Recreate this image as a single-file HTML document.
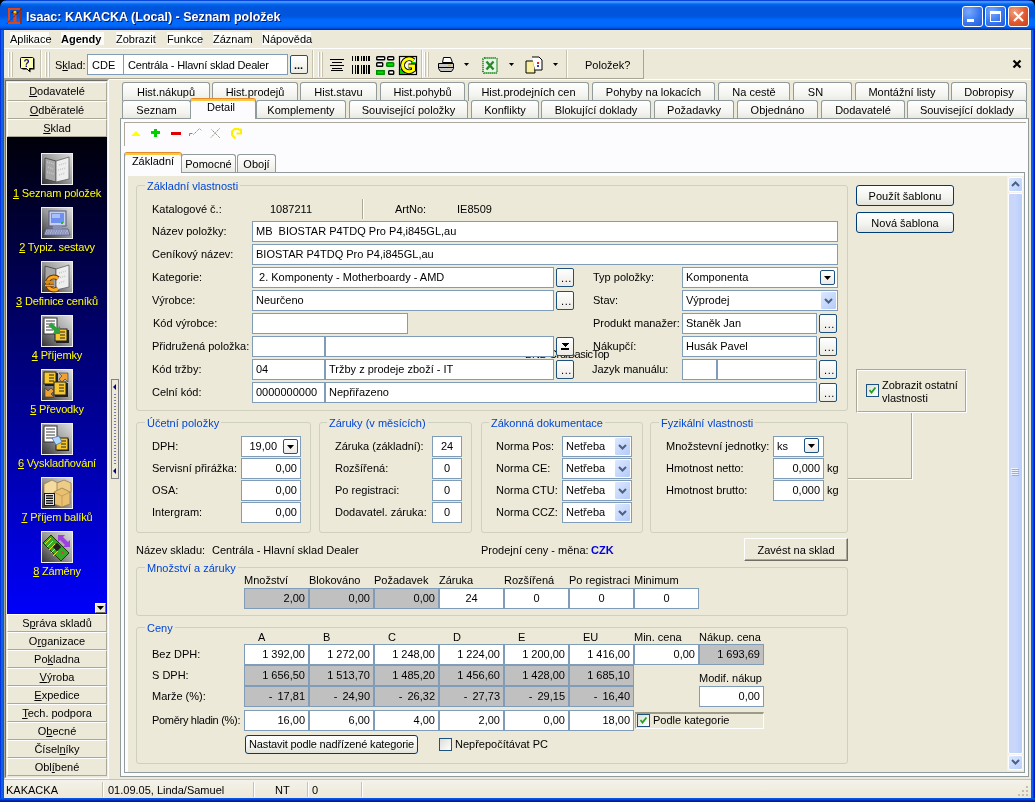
<!DOCTYPE html><html><head><meta charset="utf-8"><style>
*{margin:0;padding:0;box-sizing:border-box}
html,body{width:1035px;height:802px;overflow:hidden;background:#ECE9D8;font-family:"Liberation Sans",sans-serif;font-size:11px;color:#000}
div{position:absolute}
.t{white-space:pre;line-height:13px}
.u{text-decoration:underline}
.inp{background:#fff;border:1px solid #7F9DB9}
.gry{background:#C0C0C0;border:1px solid #7F9DB9}
.grp{border:1px solid #D0D0BF;border-radius:3px}
.gt{color:#0046D5;background:#ECE9D8;padding:0 2px}
.btn{border:1px solid #003C74;border-radius:3px;background:linear-gradient(#FFFFFF,#F3F3EF 60%,#E3E2DA);text-align:center;line-height:18px}
.dots{border:1px solid #1C5180;border-radius:2px;background:linear-gradient(#FFFFFF,#ECEBE6);}
.tab{border:1px solid #919B9C;border-bottom:none;border-radius:3px 3px 0 0;background:linear-gradient(#FFFFFF,#F3F3EF 70%,#E9E8E1);text-align:center;line-height:16px}
.tabsel{border:1px solid #919B9C;border-bottom:none;border-radius:3px 3px 0 0;background:#FCFCFE;text-align:center;border-top:1px solid #E68B2C;box-shadow:inset 0 2px #FFC83C}
.sb{background:#ECE9D8;border-top:1px solid #fff;border-left:1px solid #fff;border-right:1px solid #ACA899;border-bottom:1px solid #ACA899;text-align:center;line-height:16px}
</style></head><body><div id="root" style="left:0;top:0;width:1035px;height:802px;overflow:hidden;will-change:transform"><div style="left:0;top:0;width:1035px;height:8px;background:#000"></div>
<div style="left:0;top:0;width:1035px;height:30px;border-radius:7px 7px 0 0;background:linear-gradient(#0845D8 0px,#0845D8 1px,#3D95FF 1px,#3D95FF 2px,#3A90FF 2px,#3A90FF 3px,#0A77FF 3px,#0A77FF 4px,#0068F0 4px,#0068F0 5px,#005EE5 5px,#005EE5 6px,#0058DF 6px,#0058DF 7px,#0055DC 7px,#0055DC 8px,#0055DC 8px,#0055DC 9px,#0055DC 9px,#0055DC 10px,#0055DC 10px,#0055DC 11px,#0055DC 11px,#0055DC 12px,#0055DC 12px,#0055DC 13px,#0055DC 13px,#0055DC 14px,#0055DC 14px,#0055DC 15px,#0056DE 15px,#0056DE 16px,#0058E2 16px,#0058E2 17px,#005CE8 17px,#005CE8 18px,#0062F0 18px,#0062F0 19px,#0066F8 19px,#0066F8 20px,#006AFF 20px,#006AFF 21px,#006AFF 21px,#006AFF 22px,#006AFF 22px,#006AFF 23px,#006AFF 23px,#006AFF 24px,#006AFF 24px,#006AFF 25px,#0068FC 25px,#0068FC 26px,#0062F2 26px,#0062F2 27px,#0058E4 27px,#0058E4 28px,#0048D0 28px,#0048D0 29px,#0032B8 29px,#0032B8 30px)"></div>
<div style="left:0;top:30px;width:4px;height:772px;background:linear-gradient(90deg,#0019CF,#0853EB 1px,#166AEE 2px,#0855DD 3px)"></div>
<div style="left:1031px;top:30px;width:4px;height:772px;background:linear-gradient(90deg,#0855DD,#166AEE 1px,#0853EB 2px,#0019CF 3px)"></div>
<div style="left:0;top:798px;width:1035px;height:4px;background:linear-gradient(#0855DD,#0853EB 1px,#0733C0 2px,#001A9C 3px)"></div>
<svg style="position:absolute;left:6px;top:8px" width="17" height="17"><rect x="3" y="1" width="12" height="14" fill="none" stroke="#D84820" stroke-width="2"/><path d="M15 0V16" stroke="#8A2010" stroke-width="1.5"/><rect x="7.5" y="6" width="3" height="9" fill="#D84820"/><path d="M5.5 5L9 2.5L12 5" fill="none" stroke="#401008" stroke-width="1.2"/><circle cx="9" cy="4" r="1.6" fill="#FFD000"/><path d="M0.5 16L16 0.5" stroke="#6A1808" stroke-width="1" stroke-dasharray="1.5,1"/></svg>
<div class="t " style="left:26px;top:10px;font-size:12.5px;font-weight:bold;color:#fff;line-height:14px;text-shadow:1px 1px #0A1864">Isaac: KAKACKA (Local) - Seznam položek</div>
<div style="left:962px;top:6px;width:21px;height:21px;border:1px solid #fff;border-radius:3px;background:radial-gradient(circle at 30% 25%,#7AAAFF,#3A78F0 55%,#2458D8)"></div>
<div style="left:985px;top:6px;width:21px;height:21px;border:1px solid #fff;border-radius:3px;background:radial-gradient(circle at 30% 25%,#7AAAFF,#3A78F0 55%,#2458D8)"></div>
<div style="left:967px;top:19px;width:7px;height:3px;background:#fff"></div>
<div style="left:990px;top:11px;width:11px;height:11px;border:1px solid #fff;border-top:3px solid #fff"></div>
<div style="left:1008px;top:6px;width:21px;height:21px;border:1px solid #fff;border-radius:3px;background:radial-gradient(circle at 30% 25%,#F0A080,#E05A30 55%,#C8401C)"></div>
<svg style="position:absolute;left:1008px;top:6px" width="21" height="21"><path d="M6 6 L15 15 M15 6 L6 15" stroke="#fff" stroke-width="2.2"/></svg>
<div style="left:10px;top:32px;width:39px;height:13px;background:#FBFBF8"></div>
<div class="t " style="left:10px;top:33px;">Aplikace</div>
<div style="left:61px;top:32px;width:43px;height:13px;background:#FBFBF8"></div>
<div class="t " style="left:61px;top:33px;font-weight:bold">Agendy</div>
<div style="left:116px;top:32px;width:39px;height:13px;background:#FBFBF8"></div>
<div class="t " style="left:116px;top:33px;">Zobrazit</div>
<div style="left:167px;top:32px;width:34px;height:13px;background:#FBFBF8"></div>
<div class="t " style="left:167px;top:33px;">Funkce</div>
<div style="left:213px;top:32px;width:37px;height:13px;background:#FBFBF8"></div>
<div class="t " style="left:213px;top:33px;">Záznam</div>
<div style="left:262px;top:32px;width:49px;height:13px;background:#FBFBF8"></div>
<div class="t " style="left:262px;top:33px;">Nápověda</div>
<div style="left:4px;top:48px;width:1027px;height:1px;background:#fff"></div>
<div style="left:4px;top:78px;width:640px;height:1px;background:#A8A596"></div><div style="left:4px;top:79px;width:1027px;height:1px;background:#fff"></div>
<div style="left:8px;top:52px;width:1px;height:25px;background:#fff"></div>
<div style="left:9px;top:52px;width:1px;height:25px;background:#C5C2B2"></div>
<div style="left:11px;top:52px;width:1px;height:25px;background:#fff"></div>
<div style="left:12px;top:52px;width:1px;height:25px;background:#C5C2B2"></div>
<div style="left:40px;top:50px;width:1px;height:28px;background:#C5C2B2"></div>
<div style="left:41px;top:50px;width:1px;height:28px;background:#fff"></div>
<div style="left:45px;top:52px;width:1px;height:25px;background:#fff"></div>
<div style="left:46px;top:52px;width:1px;height:25px;background:#C5C2B2"></div>
<div style="left:48px;top:52px;width:1px;height:25px;background:#fff"></div>
<div style="left:49px;top:52px;width:1px;height:25px;background:#C5C2B2"></div>
<svg style="position:absolute;left:20px;top:57px" width="15" height="16"><path d="M2.5 1.5H14.5V12.5H10.5V15.5L7.5 12.5H2.5Z" fill="#000"/><path d="M1.5 0.5H12.5Q13.5 0.5 13.5 1.5V10.5Q13.5 11.5 12.5 11.5H9.5V14.5L6.5 11.5H1.5Q0.5 11.5 0.5 10.5V1.5Q0.5 0.5 1.5 0.5Z" fill="#FFFFB0" stroke="#000"/><text x="3.5" y="10" font-family="Liberation Sans" font-weight="bold" font-size="10" fill="#10108A">?</text></svg>
<div class="t " style="left:55px;top:59px;">S<span class="u">k</span>lad:</div>
<div class="inp" style="left:87px;top:54px;width:37px;height:21px;"></div>
<div class="t " style="left:92px;top:59px;">CDE</div>
<div class="inp" style="left:123px;top:54px;width:165px;height:21px;"></div>
<div class="t " style="left:128px;top:59px;letter-spacing:-0.2px">Centrála - Hlavní sklad Dealer</div>
<div class="dots" style="left:290px;top:55px;width:18px;height:19px;"><div class="t" style="left:3px;top:3px;font-weight:bold">...</div></div>
<div style="left:312px;top:50px;width:1px;height:28px;background:#C5C2B2"></div>
<div style="left:313px;top:50px;width:1px;height:28px;background:#fff"></div>
<div style="left:318px;top:52px;width:1px;height:25px;background:#fff"></div>
<div style="left:319px;top:52px;width:1px;height:25px;background:#C5C2B2"></div>
<div style="left:321px;top:52px;width:1px;height:25px;background:#fff"></div>
<div style="left:322px;top:52px;width:1px;height:25px;background:#C5C2B2"></div>
<svg style="position:absolute;left:329px;top:58px" width="16" height="14" shape-rendering="crispEdges"><path d="M1 1.5H15M3 4.5H13M1 7.5H15M3 10.5H13M2 12.5H14" stroke="#000" stroke-width="1"/></svg>
<svg style="position:absolute;left:351px;top:55px" width="20" height="20" shape-rendering="crispEdges"><g stroke="#000" stroke-width="1"><path d="M1.5 1V6M4.5 1V6M6.5 1V6M7.5 1V6M10.5 1V6M12.5 1V6M13.5 1V6M15.5 1V6M17.5 1V6M18.5 1V6"/><path d="M1.5 10V19M4.5 10V19M6.5 10V19M7.5 10V19M10.5 10V19M12.5 10V19M13.5 10V19M15.5 10V19M17.5 10V19M18.5 10V19"/></g></svg>
<svg style="position:absolute;left:375px;top:55px" width="20" height="21"><g stroke="#000" stroke-width="1.4"><rect x="1.7" y="1.7" width="8" height="3" rx="0.8" fill="#fff"/><rect x="12.7" y="1.7" width="6" height="3" rx="0.8" fill="#fff"/><rect x="1.7" y="7.7" width="6" height="3.5" rx="0.8" fill="#fff"/><rect x="11.7" y="7.7" width="7" height="3.5" rx="0.8" fill="#00E000" stroke="#008800"/><rect x="1.7" y="15.7" width="7.5" height="3.5" fill="#00E000" stroke="#008800"/><rect x="13.7" y="15.7" width="5" height="3.5" rx="0.8" fill="#fff"/></g></svg>
<svg style="position:absolute;left:398px;top:55px" width="20" height="21"><rect x="1.5" y="1.5" width="17" height="18" fill="#F4F4F4" stroke="#000" stroke-width="1.2"/><rect x="13" y="7" width="5" height="5" fill="#00D000"/><rect x="2" y="14" width="5" height="5" fill="#00D000"/><path d="M15.5 5.5 A6.5 6.5 0 1 0 15.5 15 L15.5 11 H10.5" fill="none" stroke="#000" stroke-width="5"/><path d="M15.5 5.5 A6.5 6.5 0 1 0 15.5 15 L15.5 11 H10.5" fill="none" stroke="#FFFF00" stroke-width="3"/></svg>
<div style="left:421px;top:50px;width:1px;height:28px;background:#C5C2B2"></div>
<div style="left:422px;top:50px;width:1px;height:28px;background:#fff"></div>
<div style="left:424px;top:52px;width:1px;height:25px;background:#fff"></div>
<div style="left:425px;top:52px;width:1px;height:25px;background:#C5C2B2"></div>
<div style="left:427px;top:52px;width:1px;height:25px;background:#fff"></div>
<div style="left:428px;top:52px;width:1px;height:25px;background:#C5C2B2"></div>
<svg style="position:absolute;left:437px;top:57px" width="18" height="16"><path d="M6.5 0.5H13.5L15.5 5.5H5.5Z" fill="#fff" stroke="#000"/><path d="M1.5 6.5H16.5V11.5L14.5 14.5H3.5L1.5 11.5Z" fill="#C8C8C8" stroke="#000"/><path d="M2 10.5H16" stroke="#000"/><path d="M11 8.5H14" stroke="#E0C000" stroke-width="1.5"/></svg>
<svg style="position:absolute;left:464px;top:63px" width="6" height="4"><path d="M0 0H5L2.5 3Z" fill="#000"/></svg>
<svg style="position:absolute;left:482px;top:57px" width="17" height="17"><rect x="1" y="1" width="14" height="15" rx="1.5" fill="#E8F4E8" stroke="#1E8A1E" stroke-width="2" stroke-dasharray="1.2,0.8"/><path d="M4.5 4.5L11.5 12.5M11.5 4.5L4.5 12.5" stroke="#2A8A2A" stroke-width="2.4"/></svg>
<svg style="position:absolute;left:509px;top:63px" width="6" height="4"><path d="M0 0H5L2.5 3Z" fill="#000"/></svg>
<svg style="position:absolute;left:525px;top:56px" width="18" height="18"><path d="M1 5H9L10 17H1Z" fill="#F8F0A0" stroke="#000"/><path d="M7 1H14L17 4V14H10" fill="#fff" stroke="#000"/><rect x="12" y="6" width="2" height="2" fill="#E02020"/><rect x="12" y="9" width="2" height="2" fill="#2040E0"/></svg>
<svg style="position:absolute;left:553px;top:63px" width="6" height="4"><path d="M0 0H5L2.5 3Z" fill="#000"/></svg>
<div style="left:566px;top:50px;width:1px;height:28px;background:#C5C2B2"></div>
<div style="left:567px;top:50px;width:1px;height:28px;background:#fff"></div>
<div class="t " style="left:585px;top:59px;">Položek?</div>
<div style="left:643px;top:50px;width:1px;height:29px;background:#A8A596"></div>
<svg style="position:absolute;left:1012px;top:59px" width="10" height="10"><path d="M1.5 1.5L8.5 8.5M8.5 1.5L1.5 8.5" stroke="#000" stroke-width="2.2"/></svg>
<div style="left:4px;top:79px;width:105px;height:700px;border-top:1px solid #ACA899;border-left:1px solid #ACA899;border-right:1px solid #fff;border-bottom:1px solid #fff"></div>
<div style="left:5px;top:80px;width:103px;height:698px;border-top:1px solid #716F64;border-left:1px solid #716F64;border-right:1px solid #F1EFE2;border-bottom:1px solid #F1EFE2"></div>
<div class="sb" style="left:7px;top:82px;width:100px;height:19px"><span class="u">D</span>odavatelé</div>
<div class="sb" style="left:7px;top:101px;width:100px;height:18px"><span class="u">O</span>dběratelé</div>
<div class="sb" style="left:7px;top:119px;width:100px;height:18px"><span class="u">S</span>klad</div>
<div style="left:7px;top:137px;width:100px;height:477px;background:linear-gradient(#00000A,#0000FA)"></div>
<svg style="position:absolute;left:41px;top:153px" width="32" height="32"><defs><linearGradient id="g0" x1="1" y1="0" x2="0" y2="1"><stop offset="0" stop-color="#E0E0E0"/><stop offset="0.5" stop-color="#9A9A9A"/><stop offset="1" stop-color="#303030"/></linearGradient></defs><rect x="0.5" y="0.5" width="31" height="31" fill="url(#g0)" stroke="#F0F0F0"/><path d="M4 5L15 8V29L4 26Z" fill="#A8A8A8" stroke="#404040" stroke-width="0.8"/><path d="M15 8L28 4V26L15 29Z" fill="#EEEEEE" stroke="#606060" stroke-width="0.8"/><path d="M6 9L13 11M7 14L12 16M6 19L13 21" stroke="#C8C8C8" stroke-width="1.5" stroke-dasharray="1,1"/><path d="M18 12L25 10M17 17L25 15M18 22L24 20" stroke="#C8C8C8" stroke-width="1.5" stroke-dasharray="1,1"/></svg>
<div class="t" style="left:7px;top:187px;width:100px;text-align:center;color:#FFFF00;letter-spacing:-0.15px"><span class="u">1</span> Seznam položek</div>
<svg style="position:absolute;left:41px;top:207px" width="32" height="32"><defs><linearGradient id="g1" x1="1" y1="0" x2="0" y2="1"><stop offset="0" stop-color="#E0E0E0"/><stop offset="0.5" stop-color="#9A9A9A"/><stop offset="1" stop-color="#303030"/></linearGradient></defs><rect x="0.5" y="0.5" width="31" height="31" fill="url(#g1)" stroke="#F0F0F0"/><rect x="8" y="4" width="17" height="15" fill="#C8D0F0" stroke="#505878"/><rect x="10" y="6" width="13" height="10" fill="#7090F0"/><rect x="11" y="7" width="8" height="4" fill="#A8C0FF"/><path d="M5 22H27L29 28H3Z" fill="#A8B0D8" stroke="#505878" stroke-width="0.8"/><path d="M6 24H26M5 26H27" stroke="#606890" stroke-width="0.8" stroke-dasharray="1.5,1"/><rect x="12" y="19" width="9" height="3" fill="#8890B8"/><rect x="20" y="15" width="2" height="2" fill="#20C020"/></svg>
<div class="t" style="left:7px;top:241px;width:100px;text-align:center;color:#FFFF00;letter-spacing:-0.15px"><span class="u">2</span> Typiz. sestavy</div>
<svg style="position:absolute;left:41px;top:261px" width="32" height="32"><defs><linearGradient id="g2" x1="1" y1="0" x2="0" y2="1"><stop offset="0" stop-color="#E0E0E0"/><stop offset="0.5" stop-color="#9A9A9A"/><stop offset="1" stop-color="#303030"/></linearGradient></defs><rect x="0.5" y="0.5" width="31" height="31" fill="url(#g2)" stroke="#F0F0F0"/><path d="M4 5L15 8V29L4 26Z" fill="#A8A8A8" stroke="#404040" stroke-width="0.8"/><path d="M15 8L28 4V26L15 29Z" fill="#EEEEEE" stroke="#606060" stroke-width="0.8"/><path d="M18 12L25 10M17 17L25 15M18 22L24 20" stroke="#C8C8C8" stroke-width="1.5" stroke-dasharray="1,1"/><path d="M17 17.5 A6.5 6.5 0 1 0 17 27.5" fill="none" stroke="#6A3000" stroke-width="5"/><path d="M17 17.5 A6.5 6.5 0 1 0 17 27.5" fill="none" stroke="#F8A820" stroke-width="3"/><path d="M4 21H13M4 24.5H13" stroke="#6A3000" stroke-width="2.6"/><path d="M4 21H13M4 24.5H13" stroke="#F8A820" stroke-width="1.4"/></svg>
<div class="t" style="left:7px;top:295px;width:100px;text-align:center;color:#FFFF00;letter-spacing:-0.15px"><span class="u">3</span> Definice ceníků</div>
<svg style="position:absolute;left:41px;top:315px" width="32" height="32"><defs><linearGradient id="g3" x1="1" y1="0" x2="0" y2="1"><stop offset="0" stop-color="#E0E0E0"/><stop offset="0.5" stop-color="#9A9A9A"/><stop offset="1" stop-color="#303030"/></linearGradient></defs><rect x="0.5" y="0.5" width="31" height="31" fill="url(#g3)" stroke="#F0F0F0"/><rect x="3" y="3" width="13" height="16" fill="#fff" stroke="#303030"/><path d="M5 6H14M5 9H14M5 12H14M5 15H12" stroke="#404040"/><rect x="15" y="15" width="13" height="13" fill="#202020"/><rect x="14" y="14" width="12" height="12" fill="#F8C830" stroke="#202020"/><path d="M19 17H24M19 20H24M19 23H24" stroke="#202020"/><path d="M16 17V19" stroke="#202020"/><path d="M9 9L16 16" stroke="#30A040" stroke-width="4"/><path d="M19 19H11L19 11Z" fill="#30A040"/></svg>
<div class="t" style="left:7px;top:349px;width:100px;text-align:center;color:#FFFF00;letter-spacing:-0.15px"><span class="u">4</span> Příjemky</div>
<svg style="position:absolute;left:41px;top:369px" width="32" height="32"><defs><linearGradient id="g4" x1="1" y1="0" x2="0" y2="1"><stop offset="0" stop-color="#E0E0E0"/><stop offset="0.5" stop-color="#9A9A9A"/><stop offset="1" stop-color="#303030"/></linearGradient></defs><rect x="0.5" y="0.5" width="31" height="31" fill="url(#g4)" stroke="#F0F0F0"/><rect x="4" y="4" width="13" height="13" fill="#202020"/><rect x="3" y="3" width="12" height="12" fill="#F8C830" stroke="#202020"/><path d="M8 6H13M8 9H13M8 12H13" stroke="#202020"/><rect x="14" y="14" width="13" height="14" fill="#202020"/><rect x="13" y="13" width="12" height="13" fill="#F8C830" stroke="#202020"/><path d="M18 16H23M18 19H23M18 22H23" stroke="#202020"/><path d="M18 4H27V13L24 10L21 13L18 10L21 7Z" fill="#F0A030" stroke="#303030" stroke-width="0.6"/><path d="M4 19L7 22L10 19L13 22L10 25L13 28H4Z" fill="#F0A030" stroke="#303030" stroke-width="0.6"/></svg>
<div class="t" style="left:7px;top:403px;width:100px;text-align:center;color:#FFFF00;letter-spacing:-0.15px"><span class="u">5</span> Převodky</div>
<svg style="position:absolute;left:41px;top:423px" width="32" height="32"><defs><linearGradient id="g5" x1="1" y1="0" x2="0" y2="1"><stop offset="0" stop-color="#E0E0E0"/><stop offset="0.5" stop-color="#9A9A9A"/><stop offset="1" stop-color="#303030"/></linearGradient></defs><rect x="0.5" y="0.5" width="31" height="31" fill="url(#g5)" stroke="#F0F0F0"/><rect x="3" y="3" width="13" height="16" fill="#fff" stroke="#303030"/><path d="M5 6H14M5 9H14M5 12H14M5 15H12" stroke="#404040"/><rect x="16" y="16" width="12" height="12" fill="#202020"/><rect x="15" y="15" width="12" height="12" fill="#F8C830" stroke="#202020"/><path d="M20 18H25M20 21H25M20 24H25" stroke="#202020"/><path d="M11 15L18 13L21 19L15 22Z" fill="#B0D8FF" stroke="#5070A0" stroke-width="0.8"/></svg>
<div class="t" style="left:7px;top:457px;width:100px;text-align:center;color:#FFFF00;letter-spacing:-0.15px"><span class="u">6</span> Vyskladňování</div>
<svg style="position:absolute;left:41px;top:477px" width="32" height="32"><defs><linearGradient id="g6" x1="1" y1="0" x2="0" y2="1"><stop offset="0" stop-color="#E0E0E0"/><stop offset="0.5" stop-color="#9A9A9A"/><stop offset="1" stop-color="#303030"/></linearGradient></defs><rect x="0.5" y="0.5" width="31" height="31" fill="url(#g6)" stroke="#F0F0F0"/><path d="M3 7L11 3L19 7V16L11 19L3 16Z" fill="#F4DCA0" stroke="#907040" stroke-width="0.7"/><path d="M16 6L23 3L30 6V15L23 18L16 15Z" fill="#ECCC88" stroke="#907040" stroke-width="0.7"/><path d="M13 15L21 11L29 15V27L21 30L13 27Z" fill="#E8C070" stroke="#907040" stroke-width="0.7"/><path d="M13 15L21 19L29 15M21 19V30" stroke="#B89050" stroke-width="0.7" fill="none"/><rect x="3" y="16" width="11" height="13" fill="#181818"/><rect x="4.5" y="17.5" width="8" height="10" fill="none" stroke="#E8E8E8" stroke-width="1"/><path d="M5 20H12M5 22.5H12M5 25H12" stroke="#E8E8E8" stroke-width="1"/></svg>
<div class="t" style="left:7px;top:511px;width:100px;text-align:center;color:#FFFF00;letter-spacing:-0.15px"><span class="u">7</span> Příjem balíků</div>
<svg style="position:absolute;left:41px;top:531px" width="32" height="32"><defs><linearGradient id="g7" x1="1" y1="0" x2="0" y2="1"><stop offset="0" stop-color="#E0E0E0"/><stop offset="0.5" stop-color="#9A9A9A"/><stop offset="1" stop-color="#303030"/></linearGradient></defs><rect x="0.5" y="0.5" width="31" height="31" fill="url(#g7)" stroke="#F0F0F0"/><path d="M2 12L10 4L28 22L20 30Z" fill="#38A828" stroke="#183808" stroke-width="1"/><path d="M4 13L10 7M6 16L12 10M8 19L14 13M10 22L16 16M12 25L17 20" stroke="#F0E020" stroke-width="1"/><rect x="13" y="13" width="6" height="6" fill="#202020" transform="rotate(45 16 16)"/><rect x="20" y="20" width="3" height="3" fill="#E04040"/><path d="M17 4H24L22 6L27 11L29 9V16H22L24 14L19 9L17 11Z" fill="#A040E0"/></svg>
<div class="t" style="left:7px;top:565px;width:100px;text-align:center;color:#FFFF00;letter-spacing:-0.15px"><span class="u">8</span> Záměny</div>
<div style="left:95px;top:603px;width:11px;height:10px;background:#ECE9D8;border:1px solid #fff;border-right-color:#716F64;border-bottom-color:#716F64"></div>
<svg style="position:absolute;left:97px;top:606px" width="7" height="4"><path d="M0 0H7L3.5 4Z" fill="#000"/></svg>
<div class="sb" style="left:7px;top:614px;width:100px;height:18px">S<span class="u">p</span>ráva skladů</div>
<div class="sb" style="left:7px;top:632px;width:100px;height:18px">O<span class="u">r</span>ganizace</div>
<div class="sb" style="left:7px;top:650px;width:100px;height:18px">Po<span class="u">k</span>ladna</div>
<div class="sb" style="left:7px;top:668px;width:100px;height:18px"><span class="u">V</span>ýroba</div>
<div class="sb" style="left:7px;top:686px;width:100px;height:18px"><span class="u">E</span>xpedice</div>
<div class="sb" style="left:7px;top:704px;width:100px;height:18px"><span class="u">T</span>ech. podpora</div>
<div class="sb" style="left:7px;top:722px;width:100px;height:18px">O<span class="u">b</span>ecné</div>
<div class="sb" style="left:7px;top:740px;width:100px;height:18px">Čísel<span class="u">n</span>íky</div>
<div class="sb" style="left:7px;top:758px;width:100px;height:18px">Obl<span class="u">í</span>bené</div>
<div style="left:111px;top:379px;width:8px;height:100px;border:1px solid #808080;background:#ECE9D8"></div>
<svg style="position:absolute;left:113px;top:384px" width="4" height="90"><path d="M3 0V6L0 3Z" fill="#000080"/><path d="M3 84V90L0 87Z" fill="#000080"/><path d="M2 10V80" stroke="#000080" stroke-dasharray="1,2"/></svg>
<div style="left:4px;top:779px;width:1027px;height:1px;background:#C8C4B0"></div><div style="left:4px;top:780px;width:1027px;height:18px;background:linear-gradient(#F4F2EA,#ECE9D8)"></div>
<div style="left:1026px;top:786px;width:2px;height:2px;background:#C3BFAE"></div>
<div style="left:1022px;top:790px;width:2px;height:2px;background:#C3BFAE"></div>
<div style="left:1026px;top:790px;width:2px;height:2px;background:#C3BFAE"></div>
<div style="left:1018px;top:794px;width:2px;height:2px;background:#C3BFAE"></div>
<div style="left:1022px;top:794px;width:2px;height:2px;background:#C3BFAE"></div>
<div style="left:1026px;top:794px;width:2px;height:2px;background:#C3BFAE"></div>
<div class="t " style="left:6px;top:784px;">KAKACKA</div>
<div style="left:102px;top:782px;width:1px;height:15px;background:#C5C2B2"></div><div style="left:103px;top:782px;width:1px;height:15px;background:#fff"></div>
<div style="left:253px;top:782px;width:1px;height:15px;background:#C5C2B2"></div><div style="left:254px;top:782px;width:1px;height:15px;background:#fff"></div>
<div style="left:307px;top:782px;width:1px;height:15px;background:#C5C2B2"></div><div style="left:308px;top:782px;width:1px;height:15px;background:#fff"></div>
<div style="left:361px;top:782px;width:1px;height:15px;background:#C5C2B2"></div><div style="left:362px;top:782px;width:1px;height:15px;background:#fff"></div>
<div class="t " style="left:108px;top:784px;">01.09.05, Linda/Samuel</div>
<div class="t " style="left:275px;top:784px;">NT</div>
<div class="t " style="left:312px;top:784px;">0</div>
<div class="tab" style="left:122px;top:82px;width:88px;height:19px;line-height:18px">Hist.nákupů</div>
<div class="tab" style="left:212px;top:82px;width:86px;height:19px;line-height:18px">Hist.prodejů</div>
<div class="tab" style="left:300px;top:82px;width:77px;height:19px;line-height:18px">Hist.stavu</div>
<div class="tab" style="left:380px;top:82px;width:85px;height:19px;line-height:18px">Hist.pohybů</div>
<div class="tab" style="left:468px;top:82px;width:121px;height:19px;line-height:18px">Hist.prodejních cen</div>
<div class="tab" style="left:592px;top:82px;width:123px;height:19px;line-height:18px">Pohyby na lokacích</div>
<div class="tab" style="left:718px;top:82px;width:72px;height:19px;line-height:18px">Na cestě</div>
<div class="tab" style="left:793px;top:82px;width:59px;height:19px;line-height:18px"><span style="margin-right:14px">SN</span></div>
<div class="tab" style="left:855px;top:82px;width:94px;height:19px;line-height:18px">Montážní listy</div>
<div class="tab" style="left:951px;top:82px;width:76px;height:19px;line-height:18px">Dobropisy</div>
<div class="tab" style="left:122px;top:100px;width:69px;height:18px;line-height:19px">Seznam</div>
<div class="tab" style="left:256px;top:100px;width:90px;height:18px;line-height:19px">Komplementy</div>
<div class="tab" style="left:349px;top:100px;width:119px;height:18px;line-height:19px">Související položky</div>
<div class="tab" style="left:471px;top:100px;width:68px;height:18px;line-height:19px">Konflikty</div>
<div class="tab" style="left:541px;top:100px;width:110px;height:18px;line-height:19px">Blokující doklady</div>
<div class="tab" style="left:654px;top:100px;width:80px;height:18px;line-height:19px">Požadavky</div>
<div class="tab" style="left:737px;top:100px;width:81px;height:18px;line-height:19px">Objednáno</div>
<div class="tab" style="left:821px;top:100px;width:84px;height:18px;line-height:19px">Dodavatelé</div>
<div class="tab" style="left:907px;top:100px;width:120px;height:18px;line-height:19px">Související doklady</div>
<div style="left:120px;top:118px;width:909px;height:659px;background:#FCFCFE;border:1px solid #919B9C"></div>
<div class="tabsel" style="left:190px;top:98px;width:66px;height:21px;line-height:17px;padding-right:4px">Detail</div>
<div style="left:124px;top:122px;width:902px;height:24px;border-top:1px solid #ACA899;border-left:1px solid #ACA899"></div>
<svg style="position:absolute;left:130px;top:128px" width="115" height="11"><path d="M1 8L6 3L11 8Z" fill="#FFFF00"/><path d="M21 4.5H30M25.5 1V9" stroke="#00D000" stroke-width="3"/><path d="M41 5.5H51" stroke="#E00000" stroke-width="3"/><path d="M59.5 8V5.5H62.5" stroke="#8C8878" stroke-width="1" fill="none"/><path d="M63.5 6.5L69.5 0.5L71.5 2.5" stroke="#8C8878" stroke-width="1" fill="none" stroke-dasharray="1.4,0.8"/><path d="M61 9L64 11L72 4" stroke="#FFFFFF" stroke-width="1" fill="none"/><path d="M81.5 1.5L90 10M89.5 0.5L81 9.5" stroke="#8C8878" stroke-width="1" stroke-dasharray="1.4,0.8"/><path d="M105.5 10.5L102 7V3.5L104.5 1H108.5L110 2.5" fill="none" stroke="#FFF000" stroke-width="2"/><path d="M111 0.5V5.5H106.5" fill="none" stroke="#FFF000" stroke-width="2"/></svg>
<div style="left:124px;top:172px;width:901px;height:601px;border:1px solid #919B9C"></div>
<div class="tab" style="left:181px;top:154px;width:55px;height:18px;line-height:18px">Pomocné</div>
<div class="tab" style="left:237px;top:154px;width:39px;height:18px;line-height:18px">Obojí</div>
<div class="tabsel" style="left:124px;top:152px;width:58px;height:21px;line-height:17px">Základní</div>
<div style="left:128px;top:176px;width:896px;height:596px;background:#ECE9D8"></div>
<div style="left:1007px;top:176px;width:17px;height:595px;background:#F3F1E8"></div>
<div style="left:1008px;top:177px;width:15px;height:15px;border:1px solid #fff;border-radius:2px;background:linear-gradient(135deg,#DCE8FF,#B8CFFB)"></div>
<svg style="position:absolute;left:1011px;top:181px" width="9" height="6"><path d="M1 5L4.5 1.5L8 5" fill="none" stroke="#4D6185" stroke-width="2"/></svg>
<div style="left:1008px;top:193px;width:15px;height:561px;border:1px solid #fff;border-radius:2px;background:linear-gradient(90deg,#CAD6F8,#C8D6FA 50%,#B8CEFA)"></div>
<svg style="position:absolute;left:1011px;top:467px" width="8" height="10"><path d="M0 1.5H7M0 3.5H7M0 5.5H7M0 7.5H7" stroke="#EEF4FF" stroke-width="1"/><path d="M1 2.5H8M1 4.5H8M1 6.5H8M1 8.5H8" stroke="#8CAEF0" stroke-width="1"/></svg>
<div style="left:1008px;top:755px;width:15px;height:15px;border:1px solid #fff;border-radius:2px;background:linear-gradient(135deg,#DCE8FF,#B8CFFB)"></div>
<svg style="position:absolute;left:1011px;top:759px" width="9" height="6"><path d="M1 1L4.5 4.5L8 1" fill="none" stroke="#4D6185" stroke-width="2"/></svg>
<div class="grp" style="left:136px;top:185px;width:712px;height:226px"></div>
<div class="t gt" style="left:145px;top:180px">Základní vlastnosti</div>
<div class="t " style="left:152px;top:203px;">Katalogové č.:</div>
<div class="t " style="left:270px;top:203px;">1087211</div>
<div style="left:362px;top:199px;width:1px;height:20px;background:#ACA899"></div><div style="left:363px;top:199px;width:1px;height:20px;background:#fff"></div>
<div class="t " style="left:395px;top:203px;">ArtNo:</div>
<div class="t " style="left:457px;top:203px;">IE8509</div>
<div class="t " style="left:152px;top:225px;">Název položky:</div>
<div class="inp t" style="left:252px;top:221px;width:586px;height:21px;line-height:19px;text-align:left;padding-left:3px;">MB  BIOSTAR P4TDQ Pro P4,i845GL,au</div>
<div class="t " style="left:152px;top:248px;">Ceníkový název:</div>
<div class="inp t" style="left:252px;top:244px;width:586px;height:21px;line-height:19px;text-align:left;padding-left:3px;">BIOSTAR P4TDQ Pro P4,i845GL,au</div>
<div class="t " style="left:152px;top:271px;">Kategorie:</div>
<div class="inp t" style="left:252px;top:267px;width:302px;height:21px;line-height:19px;text-align:left;padding-left:3px;"> 2. Komponenty - Motherboardy - AMD</div>
<div class="dots" style="left:556px;top:268px;width:18px;height:19px"><div class="t" style="left:4px;top:3px;letter-spacing:0.6px">...</div></div>
<div class="t " style="left:152px;top:294px;">Výrobce:</div>
<div class="inp t" style="left:252px;top:290px;width:302px;height:21px;line-height:19px;text-align:left;padding-left:3px;">Neurčeno</div>
<div class="dots" style="left:556px;top:291px;width:18px;height:19px"><div class="t" style="left:4px;top:3px;letter-spacing:0.6px">...</div></div>
<div class="t " style="left:153px;top:317px;">Kód výrobce:</div>
<div class="inp t" style="left:252px;top:313px;width:156px;height:21px;line-height:19px;text-align:left;padding-left:3px;"></div>
<div class="t " style="left:525px;top:348px;letter-spacing:-0.4px">BNB CrdiBasicTop</div>
<div class="t " style="left:152px;top:340px;">Přidružená položka:</div>
<div class="inp t" style="left:252px;top:336px;width:73px;height:21px;line-height:19px;text-align:left;padding-left:3px;"></div>
<div class="inp t" style="left:325px;top:336px;width:229px;height:21px;line-height:19px;text-align:left;padding-left:3px;"></div>
<div class="dots" style="left:556px;top:337px;width:18px;height:19px"></div>
<svg style="position:absolute;left:561px;top:342px" width="9" height="9" shape-rendering="crispEdges"><path d="M0 1H8L4 5Z" fill="#000"/><rect x="0" y="6" width="8" height="2" fill="#000"/></svg>
<div class="t " style="left:152px;top:363px;">Kód tržby:</div>
<div class="inp t" style="left:252px;top:359px;width:73px;height:21px;line-height:19px;text-align:left;padding-left:3px;">04</div>
<div class="inp t" style="left:325px;top:359px;width:229px;height:21px;line-height:19px;text-align:left;padding-left:3px;">Tržby z prodeje zboží - IT</div>
<div class="dots" style="left:556px;top:360px;width:18px;height:19px"><div class="t" style="left:4px;top:3px;letter-spacing:0.6px">...</div></div>
<div class="t " style="left:152px;top:386px;">Celní kód:</div>
<div class="inp t" style="left:252px;top:382px;width:73px;height:21px;line-height:19px;text-align:left;padding-left:3px;">0000000000</div>
<div class="inp t" style="left:325px;top:382px;width:492px;height:21px;line-height:19px;text-align:left;padding-left:3px;">Nepřiřazeno</div>
<div class="dots" style="left:819px;top:383px;width:18px;height:19px"><div class="t" style="left:4px;top:3px;letter-spacing:0.6px">...</div></div>
<div class="t " style="left:593px;top:271px;">Typ položky:</div>
<div class="inp t" style="left:682px;top:267px;width:156px;height:21px;line-height:19px;text-align:left;padding-left:3px;">Komponenta</div>
<div style="left:820px;top:270px;width:15px;height:15px;border:1px solid #1C5180;border-radius:2px;background:linear-gradient(#FFFFFF,#ECEBE6)"></div>
<svg style="position:absolute;left:824px;top:276px" width="8" height="5"><path d="M0 0H7L3.5 4Z" fill="#000"/></svg>
<div class="t " style="left:593px;top:294px;">Stav:</div>
<div class="inp t" style="left:682px;top:290px;width:156px;height:21px;line-height:19px;text-align:left;padding-left:3px;">Výprodej</div>
<div style="left:820px;top:291px;width:17px;height:19px;border:1px solid #fff;border-radius:2px;background:linear-gradient(135deg,#DCE8FF,#B4CBF8)"></div>
<svg style="position:absolute;left:824px;top:298px" width="9" height="6"><path d="M1 1L4.5 4.5L8 1" fill="none" stroke="#4D6185" stroke-width="2"/></svg>
<div class="t " style="left:593px;top:317px;">Produkt manažer:</div>
<div class="inp t" style="left:682px;top:313px;width:135px;height:21px;line-height:19px;text-align:left;padding-left:3px;">Staněk Jan</div>
<div class="dots" style="left:819px;top:314px;width:18px;height:19px"><div class="t" style="left:4px;top:3px;letter-spacing:0.6px">...</div></div>
<div class="t " style="left:593px;top:340px;">Nákupčí:</div>
<div class="inp t" style="left:682px;top:336px;width:135px;height:21px;line-height:19px;text-align:left;padding-left:3px;">Husák Pavel</div>
<div class="dots" style="left:819px;top:337px;width:18px;height:19px"><div class="t" style="left:4px;top:3px;letter-spacing:0.6px">...</div></div>
<div class="t " style="left:592px;top:363px;">Jazyk manuálu:</div>
<div class="inp t" style="left:682px;top:359px;width:35px;height:21px;line-height:19px;text-align:left;padding-left:3px;"></div>
<div class="inp t" style="left:717px;top:359px;width:100px;height:21px;line-height:19px;text-align:left;padding-left:3px;"></div>
<div class="dots" style="left:819px;top:360px;width:18px;height:19px"><div class="t" style="left:4px;top:3px;letter-spacing:0.6px">...</div></div>
<div class="btn t" style="left:856px;top:185px;width:98px;height:21px;line-height:21px">Použít šablonu</div>
<div class="btn t" style="left:856px;top:212px;width:98px;height:21px;line-height:21px">Nová šablona</div>
<div style="left:856px;top:369px;width:111px;height:44px;border:1px solid #ACA899;border-right-color:#fff;border-bottom-color:#fff"></div>
<div style="left:857px;top:370px;width:109px;height:42px;border:1px solid #fff;border-right-color:#ACA899;border-bottom-color:#ACA899"></div>
<div style="left:866px;top:384px;width:13px;height:13px;border:1px solid #1C5180;background:linear-gradient(135deg,#DCDCD7,#FFFFFF)"></div>
<svg style="position:absolute;left:869px;top:387px" width="7" height="7"><path d="M0.5 3L2.5 5.5L6.5 0.5" fill="none" stroke="#21A121" stroke-width="1.8"/></svg>
<div class="t " style="left:882px;top:379px;">Zobrazit ostatní</div>
<div class="t " style="left:882px;top:392px;">vlastnosti</div>
<div style="left:911px;top:413px;width:1px;height:66px;background:#ACA899"></div><div style="left:912px;top:413px;width:1px;height:67px;background:#fff"></div>
<div style="left:848px;top:478px;width:64px;height:1px;background:#ACA899"></div><div style="left:848px;top:479px;width:64px;height:1px;background:#fff"></div>
<div class="grp" style="left:136px;top:422px;width:175px;height:111px"></div>
<div class="t gt" style="left:145px;top:417px">Účetní položky</div>
<div class="t " style="left:152px;top:440px;">DPH:</div>
<div class="inp t" style="left:241px;top:436px;width:60px;height:21px;line-height:19px;text-align:right;padding-right:23px;">19,00</div>
<div style="left:283px;top:439px;width:15px;height:15px;border:1px solid #1C5180;border-radius:2px;background:linear-gradient(#FFFFFF,#ECEBE6)"></div>
<svg style="position:absolute;left:287px;top:445px" width="8" height="5"><path d="M0 0H7L3.5 4Z" fill="#000"/></svg>
<div class="t " style="left:152px;top:462px;">Servisní přirážka:</div>
<div class="inp t" style="left:241px;top:458px;width:60px;height:21px;line-height:19px;text-align:right;padding-right:3px;">0,00</div>
<div class="t " style="left:152px;top:484px;">OSA:</div>
<div class="inp t" style="left:241px;top:480px;width:60px;height:21px;line-height:19px;text-align:right;padding-right:3px;">0,00</div>
<div class="t " style="left:152px;top:506px;">Intergram:</div>
<div class="inp t" style="left:241px;top:502px;width:60px;height:21px;line-height:19px;text-align:right;padding-right:3px;">0,00</div>
<div class="grp" style="left:319px;top:422px;width:153px;height:111px"></div>
<div class="t gt" style="left:327px;top:417px">Záruky (v měsících)</div>
<div class="t " style="left:335px;top:440px;">Záruka (základní):</div>
<div class="inp t" style="left:432px;top:436px;width:30px;height:21px;line-height:19px;text-align:center;padding-left:0px;">24</div>
<div class="t " style="left:335px;top:462px;">Rozšířená:</div>
<div class="inp t" style="left:432px;top:458px;width:30px;height:21px;line-height:19px;text-align:center;padding-left:0px;">0</div>
<div class="t " style="left:335px;top:484px;">Po registraci:</div>
<div class="inp t" style="left:432px;top:480px;width:30px;height:21px;line-height:19px;text-align:center;padding-left:0px;">0</div>
<div class="t " style="left:335px;top:506px;">Dodavatel. záruka:</div>
<div class="inp t" style="left:432px;top:502px;width:30px;height:21px;line-height:19px;text-align:center;padding-left:0px;">0</div>
<div class="grp" style="left:481px;top:422px;width:162px;height:111px"></div>
<div class="t gt" style="left:489px;top:417px">Zákonná dokumentace</div>
<div class="t " style="left:496px;top:440px;">Norma Pos:</div>
<div class="inp t" style="left:562px;top:436px;width:70px;height:21px;line-height:19px;text-align:left;padding-left:3px;">Netřeba</div>
<div style="left:614px;top:437px;width:17px;height:19px;border:1px solid #fff;border-radius:2px;background:linear-gradient(135deg,#DCE8FF,#B4CBF8)"></div>
<svg style="position:absolute;left:618px;top:444px" width="9" height="6"><path d="M1 1L4.5 4.5L8 1" fill="none" stroke="#4D6185" stroke-width="2"/></svg>
<div class="t " style="left:496px;top:462px;">Norma CE:</div>
<div class="inp t" style="left:562px;top:458px;width:70px;height:21px;line-height:19px;text-align:left;padding-left:3px;">Netřeba</div>
<div style="left:614px;top:459px;width:17px;height:19px;border:1px solid #fff;border-radius:2px;background:linear-gradient(135deg,#DCE8FF,#B4CBF8)"></div>
<svg style="position:absolute;left:618px;top:466px" width="9" height="6"><path d="M1 1L4.5 4.5L8 1" fill="none" stroke="#4D6185" stroke-width="2"/></svg>
<div class="t " style="left:496px;top:484px;">Norma CTU:</div>
<div class="inp t" style="left:562px;top:480px;width:70px;height:21px;line-height:19px;text-align:left;padding-left:3px;">Netřeba</div>
<div style="left:614px;top:481px;width:17px;height:19px;border:1px solid #fff;border-radius:2px;background:linear-gradient(135deg,#DCE8FF,#B4CBF8)"></div>
<svg style="position:absolute;left:618px;top:488px" width="9" height="6"><path d="M1 1L4.5 4.5L8 1" fill="none" stroke="#4D6185" stroke-width="2"/></svg>
<div class="t " style="left:496px;top:506px;">Norma CCZ:</div>
<div class="inp t" style="left:562px;top:502px;width:70px;height:21px;line-height:19px;text-align:left;padding-left:3px;">Netřeba</div>
<div style="left:614px;top:503px;width:17px;height:19px;border:1px solid #fff;border-radius:2px;background:linear-gradient(135deg,#DCE8FF,#B4CBF8)"></div>
<svg style="position:absolute;left:618px;top:510px" width="9" height="6"><path d="M1 1L4.5 4.5L8 1" fill="none" stroke="#4D6185" stroke-width="2"/></svg>
<div class="grp" style="left:650px;top:422px;width:198px;height:111px"></div>
<div class="t gt" style="left:659px;top:417px">Fyzikální vlastnosti</div>
<div class="t " style="left:666px;top:440px;">Množstevní jednotky:</div>
<div class="inp t" style="left:773px;top:436px;width:51px;height:21px;line-height:19px;text-align:left;padding-left:3px;">ks</div>
<div style="left:804px;top:438px;width:15px;height:15px;border:1px solid #1C5180;border-radius:2px;background:linear-gradient(#FFFFFF,#ECEBE6)"></div>
<svg style="position:absolute;left:808px;top:444px" width="8" height="5"><path d="M0 0H7L3.5 4Z" fill="#000"/></svg>
<div class="t " style="left:666px;top:462px;">Hmotnost netto:</div>
<div class="inp t" style="left:773px;top:458px;width:51px;height:21px;line-height:19px;text-align:right;padding-right:3px;">0,000</div>
<div class="t " style="left:827px;top:462px;">kg</div>
<div class="t " style="left:666px;top:484px;">Hmotnost brutto:</div>
<div class="inp t" style="left:773px;top:480px;width:51px;height:21px;line-height:19px;text-align:right;padding-right:3px;">0,000</div>
<div class="t " style="left:827px;top:484px;">kg</div>
<div class="t " style="left:136px;top:544px;">Název skladu:</div>
<div class="t " style="left:212px;top:544px;">Centrála - Hlavní sklad Dealer</div>
<div class="t " style="left:481px;top:544px;">Prodejní ceny - měna:</div>
<div class="t " style="left:591px;top:544px;color:#0000E0;font-weight:bold">CZK</div>
<div class="t" style="left:744px;top:538px;width:104px;height:23px;background:#ECE9D8;border-top:1px solid #fff;border-left:1px solid #fff;border-right:1px solid #716F64;border-bottom:1px solid #716F64;box-shadow:inset -1px -1px #ACA899;text-align:center;line-height:22px">Zavést na sklad</div>
<div class="grp" style="left:136px;top:567px;width:712px;height:49px"></div>
<div class="t gt" style="left:145px;top:562px">Množství a záruky</div>
<div class="t " style="left:244px;top:574px;">Množství</div>
<div class="t " style="left:309px;top:574px;">Blokováno</div>
<div class="t " style="left:374px;top:574px;">Požadavek</div>
<div class="t " style="left:439px;top:574px;">Záruka</div>
<div class="t " style="left:504px;top:574px;">Rozšířená</div>
<div class="t " style="left:569px;top:574px;">Po registraci</div>
<div class="t " style="left:634px;top:574px;">Minimum</div>
<div class="gry t" style="left:244px;top:588px;width:65px;height:21px;line-height:19px;text-align:right;padding-right:3px;">2,00</div>
<div class="gry t" style="left:309px;top:588px;width:65px;height:21px;line-height:19px;text-align:right;padding-right:3px;">0,00</div>
<div class="gry t" style="left:374px;top:588px;width:65px;height:21px;line-height:19px;text-align:right;padding-right:3px;">0,00</div>
<div class="inp t" style="left:439px;top:588px;width:65px;height:21px;line-height:19px;text-align:center;padding-left:0px;">24</div>
<div class="inp t" style="left:504px;top:588px;width:65px;height:21px;line-height:19px;text-align:center;padding-left:0px;">0</div>
<div class="inp t" style="left:569px;top:588px;width:65px;height:21px;line-height:19px;text-align:center;padding-left:0px;">0</div>
<div class="inp t" style="left:634px;top:588px;width:65px;height:21px;line-height:19px;text-align:center;padding-left:0px;">0</div>
<div class="grp" style="left:136px;top:627px;width:712px;height:137px"></div>
<div class="t gt" style="left:145px;top:622px">Ceny</div>
<div class="t " style="left:258px;top:631px;">A</div>
<div class="t " style="left:323px;top:631px;">B</div>
<div class="t " style="left:388px;top:631px;">C</div>
<div class="t " style="left:453px;top:631px;">D</div>
<div class="t " style="left:518px;top:631px;">E</div>
<div class="t " style="left:583px;top:631px;">EU</div>
<div class="t " style="left:634px;top:631px;">Min. cena</div>
<div class="t " style="left:699px;top:631px;">Nákup. cena</div>
<div class="t " style="left:152px;top:648px;">Bez DPH:</div>
<div class="inp t" style="left:244px;top:644px;width:65px;height:21px;line-height:19px;text-align:right;padding-right:3px;">1 392,00</div>
<div class="inp t" style="left:309px;top:644px;width:65px;height:21px;line-height:19px;text-align:right;padding-right:3px;">1 272,00</div>
<div class="inp t" style="left:374px;top:644px;width:65px;height:21px;line-height:19px;text-align:right;padding-right:3px;">1 248,00</div>
<div class="inp t" style="left:439px;top:644px;width:65px;height:21px;line-height:19px;text-align:right;padding-right:3px;">1 224,00</div>
<div class="inp t" style="left:504px;top:644px;width:65px;height:21px;line-height:19px;text-align:right;padding-right:3px;">1 200,00</div>
<div class="inp t" style="left:569px;top:644px;width:65px;height:21px;line-height:19px;text-align:right;padding-right:3px;">1 416,00</div>
<div class="inp t" style="left:634px;top:644px;width:65px;height:21px;line-height:19px;text-align:right;padding-right:3px;">0,00</div>
<div class="gry t" style="left:699px;top:644px;width:65px;height:21px;line-height:19px;text-align:right;padding-right:3px;">1 693,69</div>
<div class="t " style="left:152px;top:669px;">S DPH:</div>
<div class="gry t" style="left:244px;top:665px;width:65px;height:21px;line-height:19px;text-align:right;padding-right:3px;">1 656,50</div>
<div class="gry t" style="left:309px;top:665px;width:65px;height:21px;line-height:19px;text-align:right;padding-right:3px;">1 513,70</div>
<div class="gry t" style="left:374px;top:665px;width:65px;height:21px;line-height:19px;text-align:right;padding-right:3px;">1 485,20</div>
<div class="gry t" style="left:439px;top:665px;width:65px;height:21px;line-height:19px;text-align:right;padding-right:3px;">1 456,60</div>
<div class="gry t" style="left:504px;top:665px;width:65px;height:21px;line-height:19px;text-align:right;padding-right:3px;">1 428,00</div>
<div class="gry t" style="left:569px;top:665px;width:65px;height:21px;line-height:19px;text-align:right;padding-right:3px;">1 685,10</div>
<div class="t " style="left:152px;top:690px;">Marže (%):</div>
<div class="gry t" style="left:244px;top:686px;width:65px;height:21px;line-height:19px;text-align:right;padding-right:3px;">- <span style="margin-left:2px"></span>17,81</div>
<div class="gry t" style="left:309px;top:686px;width:65px;height:21px;line-height:19px;text-align:right;padding-right:3px;">- <span style="margin-left:2px"></span>24,90</div>
<div class="gry t" style="left:374px;top:686px;width:65px;height:21px;line-height:19px;text-align:right;padding-right:3px;">- <span style="margin-left:2px"></span>26,32</div>
<div class="gry t" style="left:439px;top:686px;width:65px;height:21px;line-height:19px;text-align:right;padding-right:3px;">- <span style="margin-left:2px"></span>27,73</div>
<div class="gry t" style="left:504px;top:686px;width:65px;height:21px;line-height:19px;text-align:right;padding-right:3px;">- <span style="margin-left:2px"></span>29,15</div>
<div class="gry t" style="left:569px;top:686px;width:65px;height:21px;line-height:19px;text-align:right;padding-right:3px;">- <span style="margin-left:2px"></span>16,40</div>
<div class="t " style="left:699px;top:672px;">Modif. nákup</div>
<div class="inp t" style="left:699px;top:686px;width:65px;height:21px;line-height:19px;text-align:right;padding-right:3px;">0,00</div>
<div class="t " style="left:152px;top:714px;letter-spacing:-0.3px">Poměry hladin (%):</div>
<div class="inp t" style="left:244px;top:710px;width:65px;height:21px;line-height:19px;text-align:right;padding-right:3px;">16,00</div>
<div class="inp t" style="left:309px;top:710px;width:65px;height:21px;line-height:19px;text-align:right;padding-right:3px;">6,00</div>
<div class="inp t" style="left:374px;top:710px;width:65px;height:21px;line-height:19px;text-align:right;padding-right:3px;">4,00</div>
<div class="inp t" style="left:439px;top:710px;width:65px;height:21px;line-height:19px;text-align:right;padding-right:3px;">2,00</div>
<div class="inp t" style="left:504px;top:710px;width:65px;height:21px;line-height:19px;text-align:right;padding-right:3px;">0,00</div>
<div class="inp t" style="left:569px;top:710px;width:65px;height:21px;line-height:19px;text-align:right;padding-right:3px;">18,00</div>
<div style="left:635px;top:712px;width:129px;height:17px;background:#ECE9D8;border:1px solid #fff;border-top:2px solid #9D9A8A;border-left-color:#ACA899"></div>
<div style="left:637px;top:714px;width:13px;height:13px;border:1px solid #1C5180;background:linear-gradient(135deg,#DCDCD7,#FFFFFF)"></div>
<svg style="position:absolute;left:640px;top:717px" width="7" height="7"><path d="M0.5 3L2.5 5.5L6.5 0.5" fill="none" stroke="#21A121" stroke-width="1.8"/></svg>
<div class="t " style="left:653px;top:714px;">Podle kategorie</div>
<div class="btn t" style="left:245px;top:735px;width:173px;height:19px;line-height:17px;letter-spacing:-0.15px">Nastavit podle nadřízené kategorie</div>
<div style="left:439px;top:738px;width:13px;height:13px;border:1px solid #1C5180;background:linear-gradient(135deg,#DCDCD7,#FFFFFF)"></div>
<div class="t " style="left:455px;top:738px;">Nepřepočítávat PC</div></div></body></html>
